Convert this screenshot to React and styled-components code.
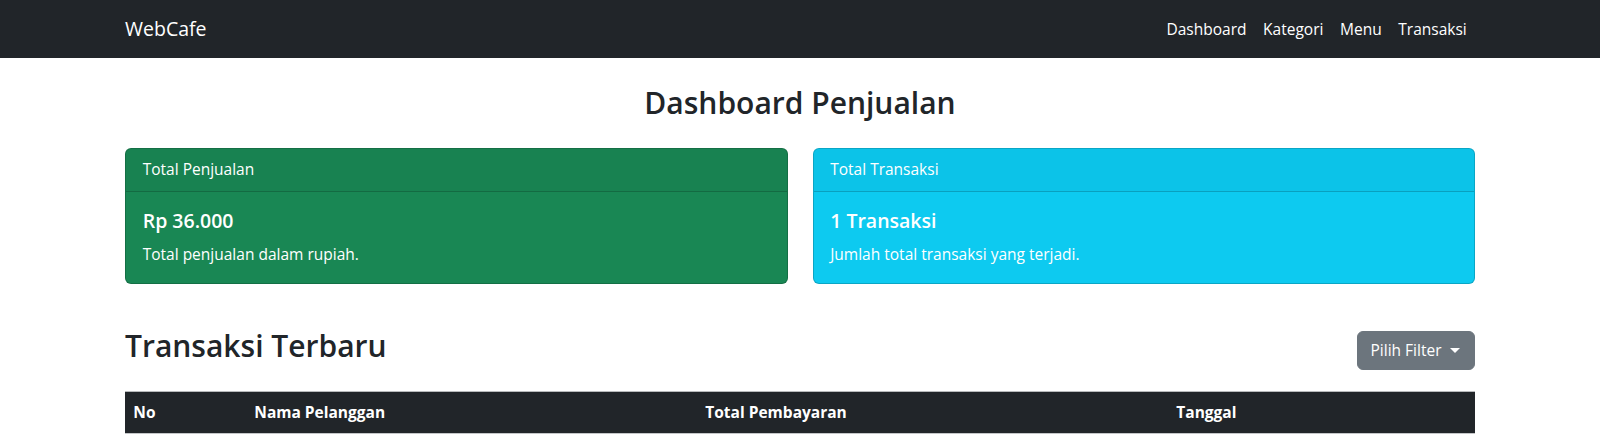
import React from 'react';
import styled, { createGlobalStyle } from 'styled-components';

const GlobalStyle = createGlobalStyle`
  * {
    box-sizing: border-box;
  }

  body {
    margin: 0;
    background: #fff;
    color: #212529;
    font-family: "Open Sans", "Noto Sans", sans-serif;
    font-size: 16px;
  }
`;

const navLinks = ['Dashboard', 'Kategori', 'Menu', 'Transaksi'];

const columns = [
    { title: 'No', width: 121 },
    { title: 'Nama Pelanggan', width: 451 },
    { title: 'Total Pembayaran', width: 471 },
    { title: 'Tanggal', width: 307 },
];

const App = () => {
    return (
        <>
            <GlobalStyle />
            <Navbar>
                <Container>
                    <Brand href="#">WebCafe</Brand>
                    <NavList>
                        {navLinks.map((item) => (
                            <NavLink href="#" key={item}>{item}</NavLink>
                        ))}
                    </NavList>
                </Container>
            </Navbar>

            <Container as="main">
                <PageTitle>Dashboard Penjualan</PageTitle>

                <CardGrid>
                    <Card $bg="#198754">
                        <CardHeader>Total Penjualan</CardHeader>
                        <CardBody>
                            <CardTitle>Rp 36.000</CardTitle>
                            <CardText>Total penjualan dalam rupiah.</CardText>
                        </CardBody>
                    </Card>
                    <Card $bg="#0dcaf0">
                        <CardHeader>Total Transaksi</CardHeader>
                        <CardBody>
                            <CardTitle>1 Transaksi</CardTitle>
                            <CardText>Jumlah total transaksi yang terjadi.</CardText>
                        </CardBody>
                    </Card>
                </CardGrid>

                <SectionHeader>
                    <SectionTitle>Transaksi Terbaru</SectionTitle>
                    <FilterButton type="button">Pilih Filter</FilterButton>
                </SectionHeader>

                <Table>
                    <thead>
                        <tr>
                            {columns.map((col) => (
                                <Th key={col.title} $w={col.width}>{col.title}</Th>
                            ))}
                        </tr>
                    </thead>
                </Table>
            </Container>
        </>
    );
};

export default App;

const Container = styled.div`
    width: 1350px;
    margin: 0 auto;
`;

const Navbar = styled.nav`
    background-color: #212529;
    height: 58px;

    ${Container} {
        height: 100%;
        display: flex;
        align-items: center;
        justify-content: space-between;
    }
`;

const Brand = styled.a`
    color: #fff;
    font-size: 19.5px;
    line-height: 30px;
    text-decoration: none;
`;

const NavList = styled.div`
    display: flex;
    align-items: center;
`;

const NavLink = styled.a`
    color: #fff;
    font-size: 15.5px;
    line-height: 25px;
    padding: 0 8.3px;
    text-decoration: none;
`;

const PageTitle = styled.h2`
    margin: 25px 0 25px;
    text-align: center;
    font-size: 30px;
    line-height: 40px;
    font-weight: 600;
`;

const CardGrid = styled.div`
    display: grid;
    grid-template-columns: 1fr 1fr;
    gap: 25px;
`;

const Card = styled.div`
    background-color: ${({ $bg }) => $bg};
    color: #fff;
    border: 1px solid rgba(0, 0, 0, 0.175);
    border-radius: 6px;
    overflow: hidden;
`;

const CardHeader = styled.div`
    padding: 8.3px 16.7px;
    background-color: rgba(0, 0, 0, 0.03);
    border-bottom: 1px solid rgba(0, 0, 0, 0.175);
    font-size: 15.5px;
    line-height: 25px;
`;

const CardBody = styled.div`
    padding: 16.7px;
`;

const CardTitle = styled.h5`
    margin: 0 0 8.3px;
    font-size: 19.5px;
    line-height: 25px;
    font-weight: 600;
`;

const CardText = styled.p`
    margin: 0;
    font-size: 15.5px;
    line-height: 25px;
`;

const SectionHeader = styled.div`
    display: flex;
    align-items: center;
    justify-content: space-between;
    margin: 42px 0 16px;
`;

const SectionTitle = styled.h2`
    margin: 0 0 8.3px;
    font-size: 30px;
    line-height: 40px;
    font-weight: 600;
`;

const FilterButton = styled.button`
    display: inline-flex;
    align-items: center;
    height: 38.6px;
    padding: 0 14.5px 0 13px;
    background-color: #6c757d;
    border: 1px solid #6c757d;
    border-radius: 6px;
    color: #fff;
    font-family: inherit;
    font-size: 15.5px;
    line-height: 25px;

    &::after {
        content: "";
        margin-left: 8px;
        border-top: 5px solid #fff;
        border-left: 5px solid transparent;
        border-right: 5px solid transparent;
    }
`;

const Table = styled.table`
    width: 100%;
    border-collapse: collapse;
    border-top: 1px solid #b8babc;
`;

const Th = styled.th`
    width: ${({ $w }) => $w}px;
    padding: 8.3px;
    background-color: #212529;
    color: #fff;
    border-bottom: 1px solid #c4c6c8;
    font-size: 15.5px;
    line-height: 25px;
    font-weight: 700;
    text-align: left;
`;
